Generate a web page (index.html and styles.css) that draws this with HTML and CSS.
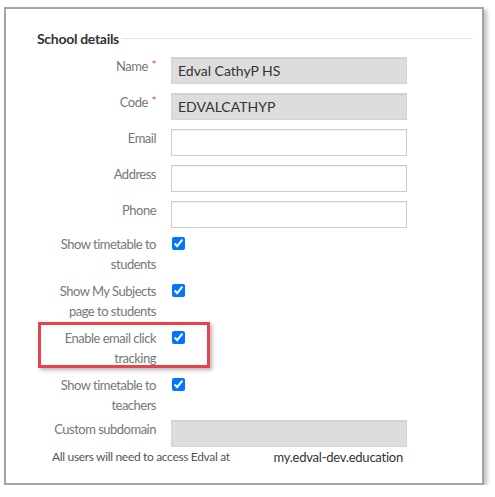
FILE: index.html
```html
<!DOCTYPE html>
<html lang="en">
<head>
  <meta charset="UTF-8">
  <meta name="viewport" content="width=device-width, initial-scale=1.0">
  <title>School details</title>
  <link rel="stylesheet" href="styles.css">
</head>
<body>
  <div class="panel">
    <fieldset class="group">
      <legend>School details</legend>

      <div class="row">
        <label for="name">Name<span class="req">*</span></label>
        <input type="text" id="name" class="readonly" value="Edval CathyP HS" readonly>
      </div>
      <div class="row">
        <label for="code">Code<span class="req">*</span></label>
        <input type="text" id="code" class="readonly" value="EDVALCATHYP" readonly>
      </div>
      <div class="row">
        <label for="email">Email</label>
        <input type="text" id="email">
      </div>
      <div class="row">
        <label for="address">Address</label>
        <input type="text" id="address">
      </div>
      <div class="row">
        <label for="phone">Phone</label>
        <input type="text" id="phone">
      </div>

      <div class="checks">
        <div class="check">
          <label for="ttStudents">Show timetable to students</label>
          <input type="checkbox" id="ttStudents" checked>
        </div>
        <div class="check">
          <label for="mySubjects">Show My Subjects page to students</label>
          <input type="checkbox" id="mySubjects" checked>
        </div>
        <div class="check">
          <label for="clickTracking">Enable email click tracking</label>
          <input type="checkbox" id="clickTracking" checked>
          <div class="highlight"></div>
        </div>
        <div class="check">
          <label for="ttTeachers">Show timetable to teachers</label>
          <input type="checkbox" id="ttTeachers" checked>
        </div>
      </div>

      <div class="row sub">
        <label for="subdomain">Custom subdomain</label>
        <input type="text" id="subdomain" class="readonly" readonly>
      </div>
      <div class="help">
        <span>All users will need to access Edval at</span>
        <span class="domain">my.edval-dev.education</span>
      </div>
    </fieldset>
  </div>
</body>
</html>
```

FILE: styles.css
```css
body {
  margin: 0;
  font-family: Lato, "Open Sans", sans-serif;
  font-size: 14px;
  color: #333;
  background: #fff;
}
.panel {
  box-sizing: border-box;
  width: 480px;
  height: 478px;
  margin: 7px 0 0 4px;
  padding: 21px 9px 0 26px;
  border: 2px solid #a5a5a5;
  box-shadow: 3px 3px 4px rgba(0, 0, 0, 0.25);
  background: #fff;
}
.group {
  margin: 0;
  padding: 10px 0 0 0;
  border: none;
  border-top: 1px solid #e4e4e4;
}
.group legend {
  margin-left: 3px;
  padding: 0 2px;
  font-weight: bold;
  font-size: 14px;
  letter-spacing: -0.3px;
  color: #333;
}
.row {
  display: flex;
  align-items: flex-start;
  margin-bottom: 9px;
}
.row label,
.check label {
  width: 124px;
  margin-right: 15px;
  text-align: right;
  font-size: 13px;
  letter-spacing: -0.5px;
  line-height: 20px;
  color: #777;
}
.row label {
  margin-top: -1px;
}
.req {
  color: #e33;
  font-size: 11px;
  margin-left: 4px;
  vertical-align: 2px;
  line-height: 12px;
}
input[type="text"] {
  box-sizing: border-box;
  width: 236px;
  height: 27px;
  margin: 0;
  padding: 0 6px;
  font-family: inherit;
  font-size: 14px;
  color: #333;
  border: 1px solid #ccc;
  box-shadow: inset 0 1px 1px rgba(0, 0, 0, 0.06);
  background: #fff;
  outline: none;
}
input.readonly {
  background: #ddd;
  border-color: #d4d4d4;
}
.checks {
  margin-top: -5px;
}
.check {
  position: relative;
  display: flex;
  align-items: flex-start;
  margin-bottom: 5px;
}
.check label {
  padding-top: 2px;
}
.check input {
  width: 13px;
  height: 13px;
  margin: 5px 0 0 1px;
}
.highlight {
  position: absolute;
  left: 6px;
  top: -4px;
  width: 172px;
  height: 46px;
  box-sizing: border-box;
  border: 3px solid #e8434a;
  box-shadow: 2px 2px 4px rgba(0, 0, 0, 0.3);
  pointer-events: none;
}
.row.sub {
  margin-bottom: 0;
}
.help {
  display: flex;
  justify-content: space-between;
  width: 351px;
  padding-left: 20px;
  line-height: 20px;
  font-size: 12px;
  letter-spacing: -0.33px;
  white-space: nowrap;
  color: #555;
}
.help .domain {
  font-size: 13px;
  letter-spacing: -0.23px;
  color: #333;
}
```
